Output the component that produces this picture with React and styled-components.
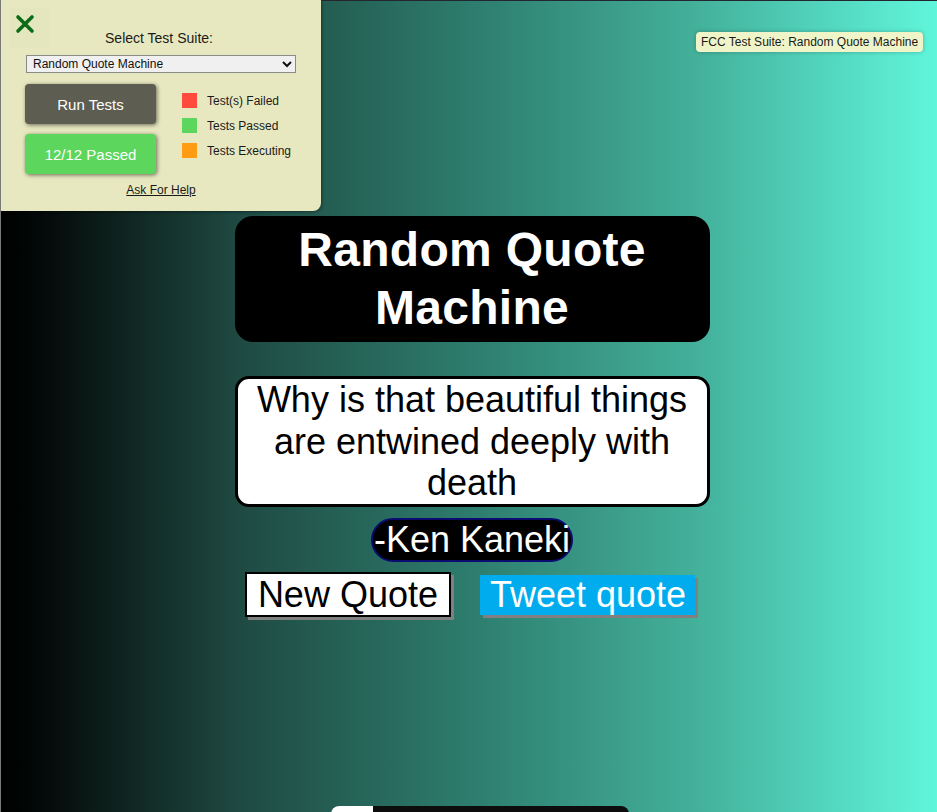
import React from 'react'
import styled, { createGlobalStyle } from 'styled-components'

const GlobalStyle = createGlobalStyle`
  html, body {
    margin: 0;
    padding: 0;
  }
  body {
    font-family: "Liberation Sans", Arial, sans-serif;
    background: linear-gradient(to right, #000000 0%, #030807 4%, #1f4b43 26%, #2d7c6d 50%, #44b29c 75%, #60f6dc 100%);
    border-top: 1px solid #23262e;
    border-left: 1px solid #7a7a7a;
    min-height: 811px;
    box-sizing: border-box;
    overflow: hidden;
  }
`

export default function App() {
  return (
    <>
      <GlobalStyle />
      <Page>
        <Title>Random Quote Machine</Title>
        <QuoteBox>Why is that beautiful things are entwined deeply with death</QuoteBox>
        <Author>-Ken Kaneki</Author>
        <ButtonRow>
          <NewQuote>New Quote</NewQuote>
          <Tweet>Tweet quote</Tweet>
        </ButtonRow>
        <Footer>
          <FooterTab />
        </Footer>
      </Page>

      <TestPanel>
        <CloseBtn>
          <svg width="20" height="20" viewBox="0 0 20 20">
            <path d="M3 3 L17 17 M17 3 L3 17" stroke="#0b6b17" strokeWidth="3.6" strokeLinecap="round" />
          </svg>
        </CloseBtn>
        <SuiteLabel>Select Test Suite:</SuiteLabel>
        <Select defaultValue="rqm">
          <option value="rqm">Random Quote Machine</option>
        </Select>
        <PanelBody>
          <Buttons>
            <PanelButton $bg="#5d5d51">Run Tests</PanelButton>
            <PanelButton $bg="#5cd65c">12/12 Passed</PanelButton>
          </Buttons>
          <Legend>
            <LegendItem><Swatch $c="#ff4b3e" />Test(s) Failed</LegendItem>
            <LegendItem><Swatch $c="#5cd65c" />Tests Passed</LegendItem>
            <LegendItem><Swatch $c="#ff9c13" />Tests Executing</LegendItem>
          </Legend>
        </PanelBody>
        <HelpLink>Ask For Help</HelpLink>
      </TestPanel>

      <Badge>FCC Test Suite: Random Quote Machine</Badge>
    </>
  )
}

const Page = styled.div`
  display: flex;
  flex-direction: column;
  align-items: center;
  padding-top: 215px;
  padding-left: 6px;
`

const Title = styled.h1`
  margin: 0;
  width: 475px;
  box-sizing: border-box;
  padding: 5px 30px;
  background: #000;
  color: #fff;
  border-radius: 18px;
  text-align: center;
  font-size: 48px;
  font-weight: bold;
  line-height: 58px;
  letter-spacing: 0.3px;
`

const QuoteBox = styled.div`
  margin-top: 34px;
  width: 475px;
  box-sizing: border-box;
  background: #fff;
  border: 3px solid #000;
  border-radius: 14px;
  padding: 0 12px;
  text-align: center;
  font-size: 36px;
  line-height: 41.5px;
  color: #000;
`

const Author = styled.div`
  margin-top: 11px;
  background: #000;
  color: #fff;
  border: 2px solid #0b0b70;
  border-radius: 22px;
  font-size: 36px;
  line-height: 40px;
  padding: 0 1px;
`

const ButtonRow = styled.div`
  display: flex;
  align-items: flex-start;
  gap: 29px;
  margin-top: 10px;
  margin-right: 4px;
`

const NewQuote = styled.button`
  font-family: inherit;
  font-size: 36px;
  line-height: 41px;
  padding: 0 11px;
  background: #fff;
  color: #000;
  border: 2px solid #000;
  box-shadow: 3px 3px 0 #808080;
  cursor: pointer;
`

const Tweet = styled.a`
  margin-top: 3px;
  font-size: 36px;
  line-height: 40px;
  padding: 0 9px 0 10px;
  background: #00acee;
  color: #fff;
  box-shadow: 3px 3px 0 #808080;
  text-decoration: none;
`

const Footer = styled.div`
  margin-top: 189px;
  width: 298px;
  height: 20px;
  background: #0d0d0d;
  border-radius: 8px 8px 0 0;
  display: flex;
  overflow: hidden;
  margin-left: 15px;
`

const FooterTab = styled.div`
  width: 42px;
  background: #fff;
`

const TestPanel = styled.div`
  position: absolute;
  top: 0;
  left: 0;
  width: 321px;
  height: 211px;
  box-sizing: border-box;
  background: #e8e8c0;
  border-left: 1px solid #7a7a7a;
  border-radius: 0 0 8px 0;
  box-shadow: 1px 1px 3px rgba(0, 0, 0, 0.4);
  display: flex;
  flex-direction: column;
  align-items: center;
  padding-top: 30px;
  font-family: "Liberation Sans", Arial, sans-serif;
`

const CloseBtn = styled.div`
  position: absolute;
  top: 8px;
  left: 8px;
  width: 40px;
  height: 40px;
  display: flex;
  align-items: flex-start;
  justify-content: flex-start;
  padding: 6px 0 0 6px;
  box-sizing: border-box;
  background: #e4e6bd;
`

const SuiteLabel = styled.div`
  font-size: 14px;
  color: #1a1a1a;
  margin-right: 4px;
`

const Select = styled.select`
  margin-top: 9px;
  width: 270px;
  height: 18px;
  font-family: inherit;
  font-size: 12px;
  padding: 0 2px;
  border: 1px solid #8a8a8a;
  background: #f0f0f0;
  color: #111;
  border-radius: 0;
`

const PanelBody = styled.div`
  display: flex;
  width: 272px;
  margin-top: 11px;
  gap: 26px;
`

const Buttons = styled.div`
  display: flex;
  flex-direction: column;
  gap: 10px;
`

const PanelButton = styled.div`
  width: 131px;
  height: 40px;
  border-radius: 4px;
  background: ${p => p.$bg};
  color: #fff;
  font-size: 15px;
  display: flex;
  align-items: center;
  justify-content: center;
  box-shadow: 1px 1px 4px rgba(0, 0, 0, 0.55);
`

const Legend = styled.div`
  display: flex;
  flex-direction: column;
  gap: 10px;
  padding-top: 9px;
`

const LegendItem = styled.div`
  display: flex;
  align-items: center;
  gap: 10px;
  font-size: 12px;
  color: #1a1a1a;
  height: 15px;
`

const Swatch = styled.span`
  width: 15px;
  height: 15px;
  background: ${p => p.$c};
`

const HelpLink = styled.a`
  margin-top: 9px;
  font-size: 12px;
  color: #1a1a1a;
  text-decoration: underline;
`

const Badge = styled.div`
  position: absolute;
  top: 32px;
  left: 696px;
  padding: 3px 5px;
  background: #eff5c8;
  border-radius: 4px;
  font-size: 12px;
  color: #1a1a1a;
  box-shadow: 0 0 4px rgba(0, 0, 0, 0.25);
  font-family: "Liberation Sans", Arial, sans-serif;
`
